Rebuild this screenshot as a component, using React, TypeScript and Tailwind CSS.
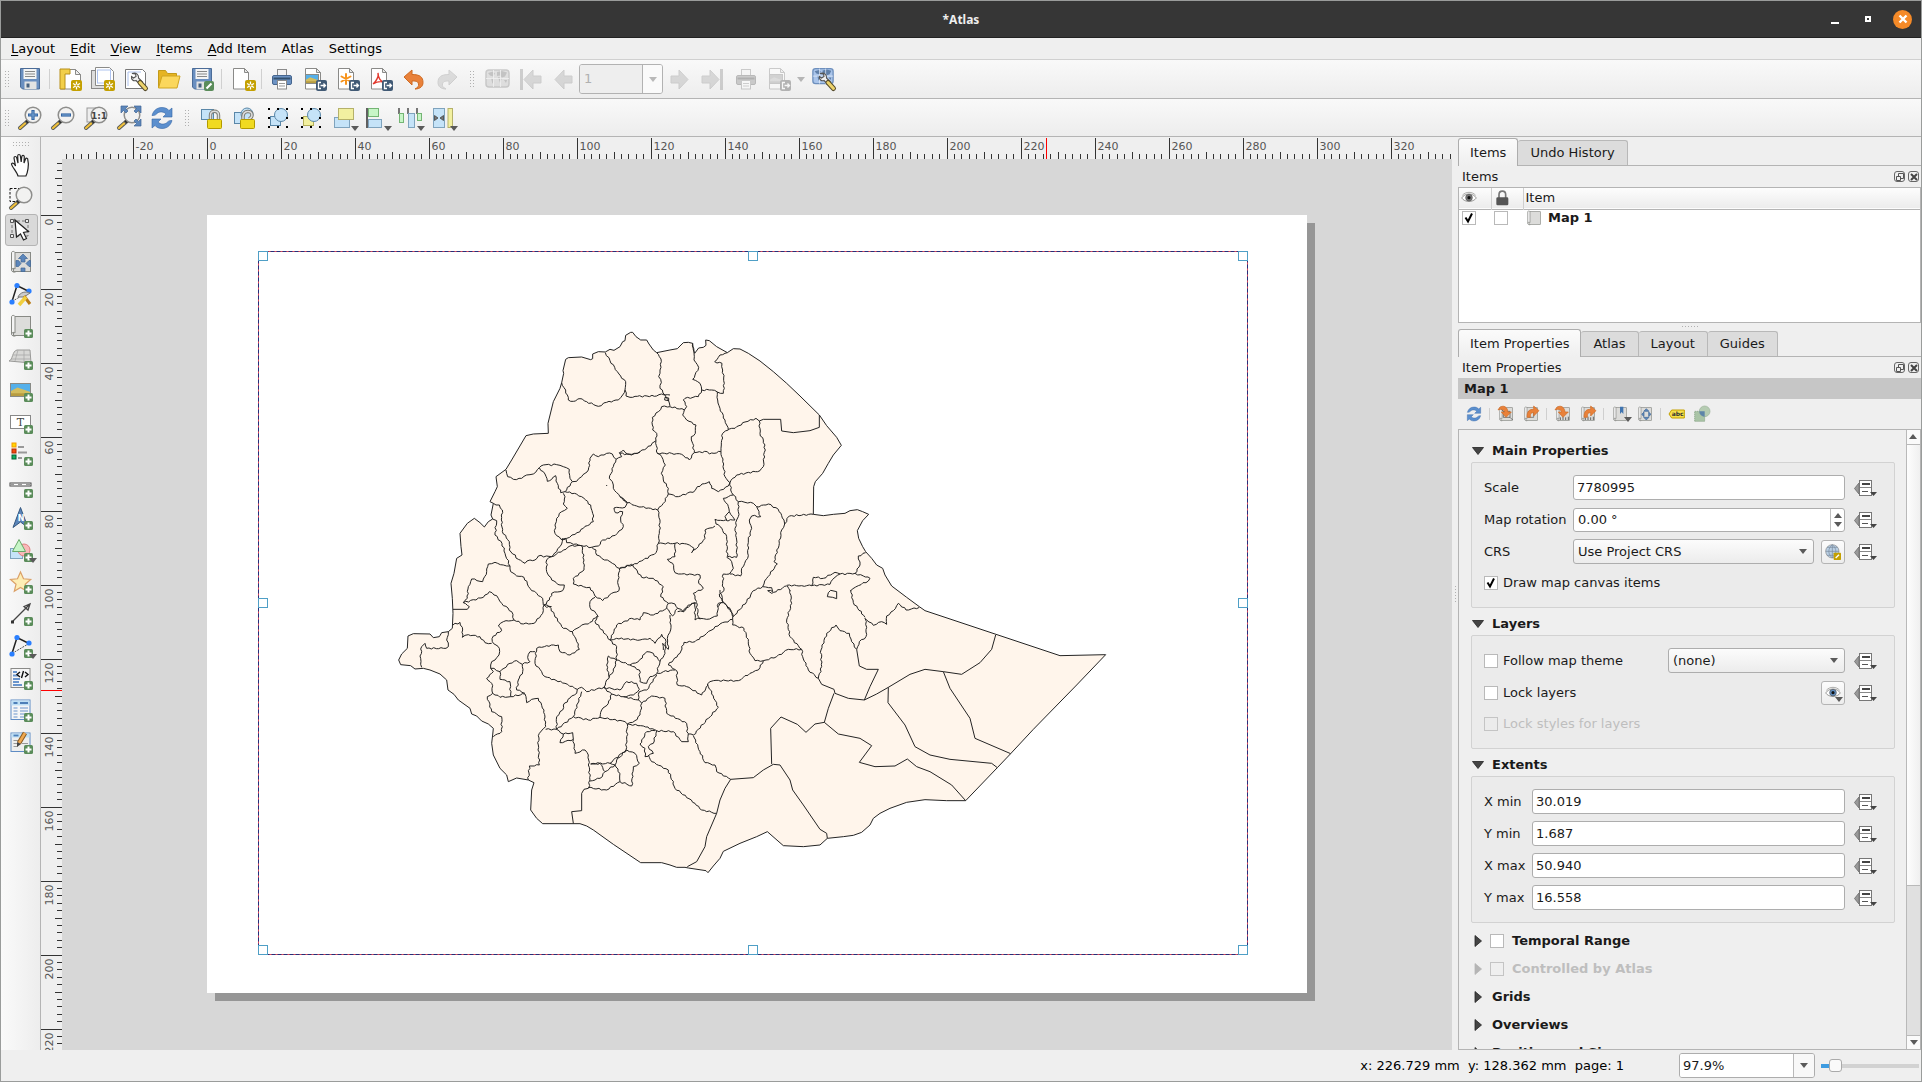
import React, { ReactNode, useId } from "react";

/* ---------- icon primitives ---------- */

function Icon({ children, size = "size-6", dim = false }: { children: ReactNode; size?: string; dim?: boolean }) {
  return (
    <svg viewBox="0 0 24 24" className={`${size} shrink-0 overflow-visible ${dim ? "opacity-40 grayscale" : ""}`} fill="none" aria-hidden="true">
      {children}
    </svg>
  );
}

const PlusBadge = () => (
  <g>
    <rect x="15" y="15" width="9" height="9" rx="1.5" fill="#5a8c5a" />
    <path d="M19.5 16.5v6M16.500 19.500h6" stroke="#fff" strokeWidth="2" />
  </g>
);

const NewBadge = () => (
  <g>
    <rect x="13" y="13" width="11" height="11" rx="2" fill="#c4a000" />
    <path d="M18.5 14.500v8M15 16.500l7 4M22 16.500l-7 4" stroke="#fff" strokeWidth="1.300" />
    <circle cx="18.500" cy="18.500" r="1.400" fill="#c4a000" stroke="#fff" strokeWidth=".8" />
  </g>
);

const ExportBadge = () => (
  <g>
    <rect x="13" y="13" width="11" height="11" rx="2" fill="#415a75" />
    <path d="M18 15.500h-2.500v6h2.500M17.500 18.500h5M20.500 16.500l2 2-2 2" stroke="#fff" strokeWidth="1.300" />
  </g>
);

const PageSheet = ({ x = 2 }: { x?: number }) => (
  <g transform={`translate(${x} 1)`}>
    <path d="M.5.5h11l4 4v16.500H.5z" fill="#fff" stroke="#8a8a88" />
    <path d="M11.500.5v4h4z" fill="#e8e8e6" stroke="#8a8a88" />
  </g>
);

const Landscape = ({ x, y, w, h }: { x: number; y: number; w: number; h: number }) => (
  <g>
    <rect x={x} y={y} width={w} height={h} fill="#55b0ea" />
    <path d={`M${x} ${y + h * 0.6}L${x + w * 0.35} ${y + h * 0.3}L${x + w} ${y + h * 0.65}V${y + h}H${x}z`} fill="#d3bd5f" />
    <path d={`M${x} ${y + h * 0.75}H${x + w}V${y + h}H${x}z`} fill="#b79c40" />
    <rect x={x} y={y} width={w} height={h} stroke="#888a85" />
  </g>
);

const Floppy = () => (
  <g>
    <path d="M2.500 1.500h19v20.500h-17l-2-2z" fill="#6a8fc0" stroke="#4b6c98" />
    <rect x="5.500" y="2" width="13" height="10" fill="#f4f4f4" />
    <path d="M7 4.500h10M7 7h10M7 9.500h10" stroke="#888" />
    <rect x="6.500" y="14.500" width="12" height="7.500" fill="#e3e3e3" />
    <rect x="8.500" y="16.500" width="3" height="4" fill="#46607f" />
  </g>
);

const Lens = ({ children }: { children?: ReactNode }) => (
  <g>
    <path d="M2 22l8-7" stroke="#555753" strokeWidth="4" strokeLinecap="round" />
    <path d="M2 22l5-4.500" stroke="#f0c13c" strokeWidth="2.200" strokeLinecap="round" />
    <path d="M8.500 16l2-2" stroke="#222" strokeWidth="3" />
    <circle cx="15" cy="9" r="7.800" fill="#f2f2f1" stroke="#8e8e8c" strokeWidth="1.500" />
    {children}
  </g>
);

const Refresh = () => (
  <g fill="#5b8fce" stroke="#3465a4" strokeWidth=".6">
    <path d="M2 9.500C3.500 4 7.500 1.500 12 1.500c3 0 5.500 1 7 3L22 2v9h-9l3-3C14 5.500 9 5 6.500 8 5 9.500 4 9.500 2 9.500z" />
    <path d="M22 14.500c-1.500 5.500-5.500 8-10 8-3 0-5.500-1-7-3L2 22v-9h9l-3 3c2 2.500 7 3 9.500 0 1.500-1.500 2.500-1.500 4.500-1.500z" />
  </g>
);

const Wrench = () => (
  <g>
    <path d="M8 8c-1-2 0-4.500 2-5l2.500 3 2-.5.5-2.500c2.500.5 3 3.500 2 5.500l5 9" stroke="#555" strokeWidth="1.200" fill="#eee" />
    <path d="M15.500 14.500l6 7" stroke="#554b2a" strokeWidth="5" strokeLinecap="round" />
    <path d="M15.500 14.500l6 7" stroke="#edd36b" strokeWidth="3" strokeLinecap="round" />
  </g>
);

/** Wrench lying diagonally over the lower right of a sheet. */
const SheetWrench = () => (
  <g>
    <path d="M8 6.500l3.500.5.500 2.500-2.500 1.500-2-1.500c-.5 3 2 5 4.500 4l4 4 2.500-2.500-4-4c.5-3-2-6-6.500-4.500z" stroke="#555" strokeWidth="1.100" fill="#f2f2f2" />
    <path d="M16 15.500l5.500 6" stroke="#554b2a" strokeWidth="5" strokeLinecap="round" />
    <path d="M16 15.500l5.500 6" stroke="#edd36b" strokeWidth="3" strokeLinecap="round" />
  </g>
);

const Printer = () => (
  <g>
    <rect x="7.500" y="2.500" width="9" height="7" fill="#f3f3f3" stroke="#8a8a8a" />
    <rect x="2.500" y="8.500" width="19" height="9" rx="1.500" fill="#6d93c4" stroke="#46668f" />
    <path d="M3.500 11.500h17" stroke="#33506f" strokeWidth="2" />
    <rect x="7.500" y="13.500" width="9" height="8.500" fill="#fff" stroke="#8a8a8a" />
    <path d="M9 16.500h6M9 19h6" stroke="#999" />
  </g>
);

const ExportImage = () => (
  <g><PageSheet /><Landscape x={2.5} y={7.5} w={13} h={9} /><ExportBadge /></g>
);

const WorldMap = () => (
  <g>
    <rect x="1" y="3" width="23" height="17" rx="3" fill="#a9c4ea" stroke="#6d8fbd" strokeWidth="1.500" />
    <path d="M3 6l5-1.500 2 2-2 3-3-1zM6 11l3 1-1.500 5zM12 5l5-1 5 1.500-2 4-3 1-2-2-3 .5zM13 10l4 1-2 5zM19 13l3 0-1 3z" fill="#5f7fa8" />
    <path d="M8.500 3v17M15.500 3v17M1 11.500h23" stroke="#e8f0fa" strokeWidth=".8" />
  </g>
);

const Arrow = () => <path d="M13 3v6h8v7h-8v6L4 12.500z" fill="#9fb0bb" stroke="#8a969e" />;

const Padlock = ({ open = false }: { open?: boolean }) => (
  <g>
    <path d={open ? "M10 14v-3c0-7 9-7 9-2 0 2-1 3-3 4" : "M10.500 14v-5c0-5 8-5 8 0v5"} stroke="#77776f" strokeWidth="3.400" />
    <path d={open ? "M10 14v-3c0-7 9-7 9-2 0 2-1 3-3 4" : "M10.500 14v-5c0-5 8-5 8 0v5"} stroke="#dedede" strokeWidth="1.500" />
    <rect x="7.500" y="13.500" width="14" height="9" rx="1" fill="#f0da20" stroke="#b39a00" />
  </g>
);

const Handles = () => (
  <path d="M2 2h2v2H2zM20 2h2v2h-2zM2 20h2v2H2zM20 20h2v2h-2zM11 20h2v2h-2zM20 11h2v2h-2zM2 11h2v2H2zM11 2h2v2h-2z" fill="#000" />
);

const MapSheet = () => (
  <g>
    <rect x="4.500" y="2.500" width="17" height="19" fill="#dcdcda" stroke="#888a85" />
    <path d="M2.500 2.500C3 1 5.500 1 6 2.500V19c-1-1-3-1-3.500 1z" fill="#f4f4f4" stroke="#888a85" />
    <path d="M2.500 20c0 2 3 2.500 4 2" stroke="#888a85" />
  </g>
);

const Nodes = () => (
  <g>
    <path d="M3 19.500L8 3.500l12 6" stroke="#222" strokeWidth="1.500" />
    <path d="M3 19.500l17-10" stroke="#555" strokeDasharray="2 1" />
    <g fill="#2a7fff"><circle cx="8" cy="3.500" r="2.600" /><circle cx="20" cy="9" r="2.600" /><circle cx="3" cy="20" r="2.600" /></g>
  </g>
);

const Eye = ({ iris = "#5f8fc4" }: { iris?: string }) => (
  <g>
    <path d="M1 12C6 4 18 4 23 12 18 19 6 19 1 12z" fill="#fff" stroke="#8b8b89" strokeWidth="1.300" />
    <path d="M2 8C7 2 17 2 22 8" stroke="#a0a09e" strokeWidth="1.300" />
    <circle cx="12" cy="11.500" r="5" fill={iris} stroke="#555" />
    <circle cx="12" cy="11.500" r="2.400" fill="#111" />
  </g>
);

const TinyDown = ({ className = "" }: { className?: string }) => (
  <svg viewBox="0 0 8 5" className={`h-[5px] w-2 ${className}`} aria-hidden="true"><path d="M0 0h8L4 5z" fill="#5a5a5a" /></svg>
);

/* ---------- toolbars ---------- */

function Tool({ label, children, menu = false, dim = false, active = false }: { label: string; children: ReactNode; menu?: boolean; dim?: boolean; active?: boolean }) {
  return (
    <button type="button" aria-label={label} title={label} disabled={dim}
      className={`relative flex h-8 w-[33px] shrink-0 items-center justify-center rounded-[3px] border ${active ? "border-[#b4b4b4] bg-[#d9d9d9]" : "border-transparent"}`}>
      <Icon dim={dim}>{children}</Icon>
      {menu && <TinyDown className="absolute right-0 bottom-0.5" />}
    </button>
  );
}

const Sep = () => <div className="mx-[3px] h-5 w-px shrink-0 bg-[#d0d0d0]" />;
const Grip = ({ wide = false }: { wide?: boolean }) => (
  <div className={`flex shrink-0 justify-center ${wide ? "w-[17px]" : "w-3"}`}>
    <div className="h-[18px] w-[6px] bg-[radial-gradient(#b0b0b0_35%,transparent_40%)] bg-[length:3px_3px]" />
  </div>
);

const topTools = (
  <>
    <Grip />
    <Tool label="Save Project"><Floppy /></Tool>
    <Sep />
    <Tool label="New Layout">
      <path d="M2.500 2.500h15l5 5V22h-20z" fill="#fff" stroke="#8a8a88" />
      <path d="M2 2h10v5H7v15H2z" fill="#f2cf4a" stroke="#b8901a" />
      <path d="M17.500 2.500v5h5z" fill="#eee" stroke="#8a8a88" /><NewBadge />
    </Tool>
    <Tool label="Duplicate Layout">
      <rect x=".5" y="3.500" width="16" height="18" fill="#ddd" stroke="#888" />
      <path d="M4.500.5h14l4 4V18.500h-18z" fill="#fff" stroke="#8a8a88" />
      <rect x="6.500" y="3" width="13" height="13" stroke="#aec3ef" /><NewBadge />
    </Tool>
    <Tool label="Layout Manager">
      <path d="M1.500 2.500h17l3 3V21.500h-20z" fill="#fff" stroke="#777" /><path d="M4 5h13M4 5v14" stroke="#aec3ef" /><SheetWrench />
    </Tool>
    <Tool label="Add Items from Template">
      <path d="M1.500 21V3.500h7l2 3h9V9" fill="#e6b422" stroke="#c29a1a" />
      <path d="M1.500 21L5 9h18l-3 12z" fill="#fbd75c" stroke="#d0a520" />
    </Tool>
    <Tool label="Save as Template">
      <Floppy /><rect x="14" y="14" width="10" height="10" rx="2" fill="#5a8c5a" /><path d="M16.500 21.500l5-5" stroke="#fff" strokeWidth="2.200" />
    </Tool>
    <Sep />
    <Tool label="Add Pages"><PageSheet x={3} /><g transform="translate(2 0)"><NewBadge /></g></Tool>
    <Sep />
    <Tool label="Print Layout"><Printer /></Tool>
    <Tool label="Export as Image"><ExportImage /></Tool>
    <Tool label="Export as SVG">
      <PageSheet /><path d="M10 7v10M5.500 9.500l9 5M14.500 9.500l-9 5" stroke="#f7941d" strokeWidth="2" strokeLinecap="round" /><ExportBadge />
    </Tool>
    <Tool label="Export as PDF">
      <PageSheet /><path d="M4 17c3-2 6-8 5-11 0 5 3 9 6 9-3-1-8 0-11 2z" stroke="#e2372c" strokeWidth="1.400" /><ExportBadge />
    </Tool>
    <Tool label="Undo"><path d="M2 10l8-7v4.500c8 0 11 2.500 11 8 0 4-3 6.500-8 6.500 3-1.500 4-3 3.500-5-.5-2.500-2-3-6.500-3V18z" fill="#e9813a" stroke="#ce6a22" /></Tool>
    <Tool label="Redo" dim><path d="M22 10l-8-7v4.500c-8 0-11 2.500-11 8 0 4 3 6.500 8 6.500-3-1.500-4-3-3.500-5 .5-2.500 2-3 6.500-3V18z" fill="#b5b8b3" stroke="#999" /></Tool>
    <Grip wide />
    <Tool label="Preview Atlas" dim><WorldMap /></Tool>
    <Tool label="First Feature" dim><g transform="translate(2 0)"><Arrow /></g><rect x="2" y="2" width="3" height="21" fill="#8a969e" /></Tool>
    <Tool label="Previous Feature" dim><Arrow /></Tool>
    <div className="flex h-[30px] w-[84px] shrink-0 overflow-hidden rounded-[3px] border border-[#b2b2b2]">
      <input aria-label="Atlas page" disabled defaultValue="1" className="min-w-0 flex-1 bg-[#eeeeee] pl-1 text-[13px] text-[#b0b0b0]" />
      <button type="button" aria-label="Choose page" disabled className="flex w-5 items-center justify-center border-l border-[#b2b2b2] bg-[#fafafa]"><TinyDown className="opacity-40" /></button>
    </div>
    <Tool label="Next Feature" dim><g transform="rotate(180 12 12.500)"><Arrow /></g></Tool>
    <Tool label="Last Feature" dim><g transform="rotate(180 11 12.500)"><Arrow /></g><rect x="19" y="2" width="3" height="21" fill="#8a969e" /></Tool>
    <Tool label="Print Atlas" dim><Printer /></Tool>
    <Tool label="Export Atlas as Images" dim><ExportImage /></Tool>
    <button type="button" disabled aria-label="Atlas export options" className="flex w-3 shrink-0 justify-center"><TinyDown className="opacity-40" /></button>
    <Tool label="Atlas Settings"><g transform="translate(0 -1) scale(.88)"><WorldMap /></g><SheetWrench /></Tool>
  </>
);

const bottomTools = (
  <>
    <Grip />
    <Tool label="Zoom In"><Lens><path d="M15 4v10M10 9h10" stroke="#3465a4" strokeWidth="3.200" /><path d="M15 5v8M11 9h8" stroke="#729fcf" strokeWidth="1.200" /></Lens></Tool>
    <Tool label="Zoom Out"><Lens><path d="M10 9h10" stroke="#3465a4" strokeWidth="3.200" /><path d="M11 9h8" stroke="#729fcf" strokeWidth="1.200" /></Lens></Tool>
    <Tool label="Zoom to 100%">
      <rect x="3" y="2" width="11" height="14" fill="#eee" stroke="#999" />
      <Lens><text x="15" y="12.500" textAnchor="middle" fontSize="9" fontWeight="bold" fill="#444">1:1</text></Lens>
    </Tool>
    <Tool label="Zoom Full">
      <Lens />
      <g fill="#5c86ba" stroke="#3f6695" strokeWidth=".7">
        <path d="M4 0h7L8.500 2.500 11 5 9 7 6.500 4.500 4 7zM24 0v7l-2.500-2.500L19 7l-2-2 2.500-2.500L17 0zM24 20h-7l2.500-2.500L17 15l2-2 2.500 2.500L24 13z" />
      </g>
    </Tool>
    <Tool label="Refresh View"><Refresh /></Tool>
    <Grip wide />
    <Tool label="Lock Selected Items"><rect x="1.500" y="3.500" width="12" height="10" fill="#c5e3f8" stroke="#5a87a8" /><Padlock /></Tool>
    <Tool label="Unlock All"><rect x="1.500" y="6.500" width="10" height="11" fill="#c5e3f8" stroke="#5a87a8" /><circle cx="14" cy="8" r="6" fill="#c5e3f8" stroke="#5a87a8" /><Padlock open /></Tool>
    <Tool label="Group"><rect x="4.500" y="10.500" width="10" height="9" fill="#c5e3f8" stroke="#5a87a8" /><circle cx="15" cy="9" r="6.500" fill="#c5e3f8" stroke="#5a87a8" /><Handles /></Tool>
    <Tool label="Ungroup"><rect x="4.500" y="10.500" width="10" height="9" fill="#f2f0a0" stroke="#b5b05a" /><circle cx="15" cy="9" r="6.500" fill="#c5e3f8" stroke="#5a87a8" /><Handles /></Tool>
    <Tool label="Raise Selected Items" menu><rect x="2.500" y="11.500" width="15" height="10" fill="#c5e3f8" stroke="#7fa3bd" /><rect x="6.500" y="2.500" width="15" height="11" fill="#f2f0a0" stroke="#b5b16a" /></Tool>
    <Tool label="Align Left" menu><path d="M2 2v20" stroke="#222" strokeWidth="1.400" /><rect x="3.500" y="2.500" width="10" height="8" fill="#c7f5c7" stroke="#74b574" /><rect x="3.500" y="13.500" width="13" height="8" fill="#c5e3f8" stroke="#7fa3bd" /></Tool>
    <Tool label="Distribute Left Edges" menu><path d="M1 2v6M10 2v6M19 2v6" stroke="#222" strokeWidth="1.200" /><rect x="1.500" y="7.500" width="4" height="9" fill="#c7f5c7" stroke="#74b574" /><rect x="10.500" y="7.500" width="6" height="14" fill="#c5e3f8" stroke="#7fa3bd" /><rect x="19.500" y="7.500" width="4" height="7" fill="#c7f5c7" stroke="#74b574" /></Tool>
    <Tool label="Resize to Narrowest" menu><rect x="2.500" y="2.500" width="11" height="19" fill="#c5e3f8" stroke="#7fa3bd" /><rect x="17" y="2.500" width="4.500" height="19" fill="#f2f0a0" stroke="#b5b16a" /><path d="M7 12L3.500 9.500v5zM9 12l3.500-2.500v5z" stroke="#444" fill="#777" strokeWidth=".8" /></Tool>
  </>
);

const sideTools = (
  <>
    <Tool label="Pan Layout">
      <path d="M9 22c-1-4-6-9-6.500-12C3 8.500 5 9 6.500 12L5 4c0-2 2.300-2 2.800 0L9 9l-.3-7c0-2 2.500-2 2.700 0l.8 6 .6-5.500c.3-1.800 2.500-1.500 2.500.3L15 9l1.500-4c.6-1.500 2.500-.8 2.300.8 1.500 5-.3 13-1.800 16z" fill="#fff" stroke="#222" strokeWidth="1.200" />
    </Tool>
    <Tool label="Zoom"><path d="M1 2.500h14v13H1z" stroke="#111" strokeDasharray="2.500 1.500" /><Lens /></Tool>
    <Tool label="Select/Move Item" active>
      <path d="M3 3h16v15H3z" stroke="#777" strokeDasharray="3 2" />
      <g fill="#eee" stroke="#555"><path d="M1.500 1.500h3v3h-3zM16.500 1.500h3v3h-3zM1.500 16.500h3v3h-3z" /></g>
      <path d="M6 2l1.500 17 4-3 3 6 3-1.500-3-6 5-1z" fill="#fff" stroke="#222" strokeWidth="1.200" />
    </Tool>
    <Tool label="Move Item Content">
      <MapSheet />
      <path d="M14 4l4.500 4.500H16V12h-4V8.500H9.500zM7 10.500h2.500l2.500 3-2.500 3H7zM21.500 10.500H20L17 13.500l3 3h1.500zM12 18h4v3.500h-4z" fill="#5c86ba" stroke="#3f6695" strokeWidth=".7" />
    </Tool>
    <Tool label="Edit Nodes Item"><Nodes /><path d="M9 15c2-5 8-6 12-4l-6 4z" fill="#ccc" stroke="#777" /><path d="M15 14l6 8" stroke="#b97a12" strokeWidth="3" /><path d="M17 15l-7 8" stroke="#f1cf3f" strokeWidth="3.500" /></Tool>
    <Tool label="Add Map"><MapSheet /><PlusBadge /></Tool>
    <Tool label="Add 3D Map">
      <path d="M0 15c4-1 3-10 8-11h13l1 13-11-1z" fill="#d8d8d6" stroke="#9a9a98" />
      <path d="M4 9h17M2 13h19M9 4L6 15M15 4v13" stroke="#aaa" strokeWidth=".8" /><PlusBadge />
    </Tool>
    <Tool label="Add Picture"><Landscape x={1.5} y={5.5} w={20} h={13} /><PlusBadge /></Tool>
    <Tool label="Add Label">
      <rect x="1.500" y="5.500" width="20" height="13" fill="#fff" stroke="#888" />
      <text x="11.500" y="16" textAnchor="middle" fontSize="11" fontFamily="DejaVu Serif, serif" fill="#444">T</text><PlusBadge />
    </Tool>
    <Tool label="Add Legend">
      <rect x="3" y="1" width="4" height="4" fill="#ffd700" stroke="#f59a00" /><rect x="3" y="7" width="4" height="4" fill="#f54a10" stroke="#b32a00" /><rect x="3" y="13" width="4" height="4" fill="#10b060" stroke="#066034" />
      <path d="M9 5h6M9 10.500h9M9 16h4" stroke="#999" strokeWidth="1.800" /><PlusBadge />
    </Tool>
    <Tool label="Add Scale Bar"><rect x="1" y="9" width="21" height="3" fill="#fff" stroke="#444" /><path d="M1 10.500h4M9 10.500h4M17 10.500h4" stroke="#999" strokeWidth="2" /><PlusBadge /></Tool>
    <Tool label="Add North Arrow">
      <path d="M11.500 1.500l7.500 20-7.500-5.500-7.500 5.500z" fill="#5c86ba" stroke="#34577f" />
      <text x="12" y="15" textAnchor="middle" fontSize="8" fontWeight="bold" fill="#fff">N</text><PlusBadge />
    </Tool>
    <Tool label="Add Shape" menu><rect x="1.500" y="10.500" width="12" height="10" fill="#c5e3f8" stroke="#7fa3bd" /><circle cx="15" cy="12" r="6" fill="#f9b9b9" stroke="#e07f7f" /><path d="M10 1.500l6.500 12h-13z" fill="#c7f5c7" stroke="#68a868" /><PlusBadge /></Tool>
    <Tool label="Add Marker"><path d="M11.500 2l3 6.800 7.200.7-5.500 4.800 1.800 7-6.500-3.800-6.200 3.800 1.700-7L1.500 9.500l7-.7z" fill="#fdeeb5" stroke="#dba067" strokeWidth="1.200" /><PlusBadge /></Tool>
    <Tool label="Add Arrow"><path d="M3 20L20 3M15 4.500L21 2l-2 6z" stroke="#444" strokeWidth="1.300" fill="#fff" /><path d="M2 18.500h3v3H2z" fill="#333" /><PlusBadge /></Tool>
    <Tool label="Add Node Item" menu><Nodes /><PlusBadge /></Tool>
    <Tool label="Add HTML">
      <rect x="2" y="2.500" width="19" height="19" fill="#f6f6f6" stroke="#8a8a88" />
      <path d="M4 6h4M4 9.500h5M4 13h7M4 16h6M4 19h9" stroke="#6a95cc" strokeWidth="1.800" />
      <path d="M11 6l-3 2.500 3 2.500M16 6l3 2.500-3 2.500M14.500 5l-2 7" stroke="#111" strokeWidth="1.400" /><PlusBadge />
    </Tool>
    <Tool label="Add Fixed Table">
      <rect x="2" y="2" width="19" height="19.500" fill="#f6f6f6" stroke="#5f8cc4" /><rect x="2.500" y="2.500" width="18" height="5" fill="#bfe0f5" />
      <path d="M4.500 5h4M11 5h8" stroke="#4d7fb8" strokeWidth="1.800" /><path d="M4.500 10h4M11 10h8M4.500 13h4M11 13h8M4.500 16h4M11 16h8M4.500 19h4M11 19h8" stroke="#6a95cc" /><PlusBadge />
    </Tool>
    <Tool label="Add Attribute Table">
      <rect x="2" y="3" width="19" height="18.500" fill="#eee" stroke="#5f8cc4" /><rect x="2.500" y="3.500" width="18" height="4" fill="#bfe0f5" />
      <path d="M4.500 5.500h5" stroke="#4d7fb8" strokeWidth="1.800" /><path d="M4.500 10.500h8M4.500 13.500h4M4.500 16.500h4M13 13.500h6" stroke="#999" />
      <path d="M16 3l-6 10" stroke="#8a5a20" strokeWidth="4.600" /><path d="M16 3l-6 10" stroke="#f0a850" strokeWidth="2.600" /><path d="M8 12l4 2-4 3z" fill="#444" /><PlusBadge />
    </Tool>
  </>
);

/* ---------- rulers ---------- */

const PX_PER_MM = 3.7;

function Ruler({ zero, from, to, marker, vertical = false }: { zero: number; from: number; to: number; marker: number; vertical?: boolean }) {
  const ticks: ReactNode[] = [];
  for (let mm = from; mm <= to; mm += 2) {
    const p = Math.floor(zero + mm * PX_PER_MM) + 0.5;
    const len = mm % 20 === 0 ? 21 : mm % 10 === 0 ? 7 : 5;
    ticks.push(vertical ? <path key={mm} d={`M${21 - len} ${p}H21`} /> : <path key={mm} d={`M${p} ${21 - len}V21`} />);
    if (mm % 20 === 0)
      ticks.push(
        vertical ? (
          <text key={`t${mm}`} transform={`translate(12 ${p + 3}) rotate(-90)`} textAnchor="end" fill="#555" stroke="none">{mm}</text>
        ) : (
          <text key={`t${mm}`} x={p + 2} y="12" fill="#555" stroke="none">{mm}</text>
        )
      );
  }
  return (
    <svg className={vertical ? "h-full w-[21px] shrink-0" : "h-[21px] w-full"} fontSize="11" stroke="#333" aria-hidden="true">
      {ticks}
      {vertical ? <path d={`M0 ${marker}.5H21`} stroke="#f00" /> : <path d={`M${marker}.5 0V21`} stroke="#f00" />}
    </svg>
  );
}

/* ---------- district map ---------- */

type Tile = { x: number; y: number; lines: string[] };

const outline: { x: number; y: number; pts: string }[] = [
  { x: 0, y: 0, pts: "545,188 551,160 549,152 557,118 565,113 605,111 632,119 638,116 638,102 655,95 676,96 690,88 702,91 720,80 728,65 735,62 737,46 752,37" },
  { x: 720, y: 0, pts: "38,37 48,50 62,60 80,60 87,72 100,90 110,98 150,90 172,86 190,68 205,67 218,70 220,90 224,100 236,84 250,82 258,76 257,60 268,62 290,80 322,98 340,86 360,87 385,100 420,123 460,155 500,190 540,228 598,285 620,317 650,352 664,376 640,405 625,430 608,460 586,485 581,500 580,583 610,587 640,583 675,580 690,572 712,569 728,575 746,583 728,602 712,632 716,655 728,680 737,695 755,715 770,735 788,745 795,765 815,798 860,832 898,860" },
  { x: 900, y: 810, pts: "735,62 945,132 1140,197 1277,194 1190,285 1060,418 992,491 952,533 857,632 800,632 735,629 680,637 630,655 600,670 580,685 570,705 545,727 520,736 490,740 442,745 420,765 370,770 310,767 262,725 230,740 180,760 130,784 120,805 100,828 84,848 78,842 25,834" },
  { x: 0, y: 840, pts: "915,802 890,802 870,795 845,788 782,788 700,733 640,690 620,678 600,671 488,671 470,655 452,630 455,570 462,548 445,540 410,534 385,545 380,525 360,505 340,465 335,430 338,405 340,385 325,372 305,363 290,348 275,342 270,325 235,300 222,283 204,270 200,240 180,222 150,210 130,205 105,207 92,197 62,194 56,180 65,162 82,145 84,108 100,101 150,102 160,113 178,110 185,98 205,95 217,85 219,40" },
  { x: 0, y: 0, pts: "217,835 213,790 222,760 230,715 246,705 243,680 240,640 262,610 283,595 300,608 313,621 325,605 338,597 333,585 340,550 330,545 345,515 352,500 348,470 378,448 395,420 438,347 460,342 505,340 504,310 520,245 540,205" },
];

const tiles: Tile[] = [
  {
    x: 0, y: 0,
    lines: [
      "545,188 562,225 565,240 580,244 600,236 620,245 655,259 680,247 715,240 728,225 735,210 737,185 722,168 712,155 690,122 676,98",
      "735,210 738,228 750,232 765,229 830,228 845,222 870,225",
      "378,450 383,470 400,478 425,475 440,465 460,462 478,443 490,435 530,434 550,440 568,448 570,475 577,485 590,484 605,470 625,450 630,415 640,402 655,410 680,400 697,402 708,418 725,410 718,398 730,390 742,402 755,403 780,396",
      "478,443 495,462 502,484 515,478 527,467 532,490 542,518 555,515 577,485",
      "708,418 700,440 688,475 697,485 700,505 720,530 742,548",
      "742,548 735,562 702,564 706,578 728,575 722,600 730,620 712,640 690,655 668,660 655,678 635,682 605,677 580,673 560,668 558,655 545,658",
      "555,515 590,522 612,535 632,555 638,580 640,605 610,625 585,643 560,655 543,658 525,640 525,615 530,595 545,575 562,565 550,552 555,530 550,520",
      "340,550 358,555 367,570 364,600 367,635 388,665 388,690 415,718 435,730 450,720 465,720 475,708 515,710 530,695 545,672 548,655",
      "338,597 350,602 345,645 366,670 375,700 390,738 392,755 410,768 432,772 450,805 470,820 488,835 490,855",
      "515,710 500,720 500,755 515,780 540,795 553,795 548,812 515,820 508,840 492,855 500,862 515,860",
      "515,710 550,690 570,678 605,677 612,720 612,750 580,775 580,792 610,800 630,802 645,828 668,842 695,820 717,812 714,780 718,745 690,725 665,715 650,705 648,690 635,682",
      "718,745 755,733 758,735",
      "390,738 370,735 345,727 325,732 320,755 308,785 275,777 265,800 262,835 250,848",
      "250,848 310,832 328,815 350,827 365,850 395,875 402,900",
      "645,832 630,845 630,862 648,880 655,890",
      "679,495 681,498",
    ],
  },
  {
    x: 720, y: 0,
    lines: [
      "110,98 118,110 124,125 120,150 116,170 124,188 120,205 135,225 145,240 150,258",
      "135,232 146,234 146,242 134,240 135,232",
      "218,70 222,100 222,120 236,142 225,165 218,178 240,190 245,210 275,210 292,216 310,220 313,190 308,150 306,130 284,125 300,105 322,98",
      "245,210 235,230 195,235 190,240 200,260 193,270 150,260 125,260 115,275 97,292 98,330 110,340 108,362 112,400",
      "193,270 188,285 200,300 228,315 226,340 214,350 218,370 223,398 208,420 185,403 155,400 112,400",
      "223,398 262,395 268,402 303,395 304,375 308,340 325,330 315,300 300,265 293,240 292,216",
      "303,395 308,425 315,470 330,488",
      "325,328 345,325 375,306 408,295 418,303 420,340 430,360 435,375 430,440 420,452 350,465 338,475 330,488",
      "112,400 125,410 136,435 124,460 130,480 145,505 145,522 130,550 113,570 50,558 22,548 0,530",
      "145,522 175,530 225,512 232,500 268,485 275,505 295,515 325,498 330,488 332,510 340,525 355,545 375,547 400,550 410,560 422,590 395,588 388,600 395,625 385,660 383,715 365,745 362,768 330,762",
      "355,545 355,590 350,600 345,625 350,660 350,712 322,710 320,650 300,620 288,612 285,598 310,602 345,600",
      "340,525 310,535 325,560 328,575 315,590 320,600",
      "328,575 338,590 345,600",
      "410,560 445,552 475,568 492,600 494,612 485,630 478,670 462,725 472,732 440,775 428,800 455,803 458,815 443,812 455,820 500,798",
      "494,612 508,588 580,583",
      "113,570 120,600 118,640 115,670 165,670 200,672 222,685 215,698 235,680 255,655 255,630 285,618",
      "115,670 108,698 70,720 38,735 0,745",
      "165,670 165,710 142,718 158,730 165,758 185,762 240,765 236,790 250,805 220,820 230,845",
      "38,735 65,772 100,775 130,800 122,830 145,850 165,852 173,865 158,888 140,865 145,850",
      "173,865 190,875 215,850 230,848 235,890 240,898",
      "320,712 335,725 340,745 328,762 310,762 308,790 312,812 298,822 308,845 295,860",
      "308,845 330,865 340,890 380,845 400,812 428,800",
      "500,796 545,797 575,797 580,772 610,775 645,757 660,762 705,760 720,735 715,708 737,698",
      "575,797 630,793 638,778 660,762",
      "705,760 730,768 750,775 745,783 715,797 692,812",
      "502,798 510,812",
      "108,362 80,385 60,395 35,405 0,400",
    ],
  },
  {
    x: 0, y: 840,
    lines: [
      "262,28 268,20 250,8",
      "219,75 240,67 248,90 247,112 265,104 300,110 315,128 335,130",
      "402,60 370,65 355,78 365,92 340,108 337,125 358,145 357,165 345,180 335,185 332,205",
      "402,60 430,72 462,70 488,40 492,15",
      "492,15 508,20 545,80 577,95 605,75 625,72 652,48 645,65 690,120",
      "577,95 590,125 598,148 570,165 540,155 535,135 500,137 470,145 465,190 485,215 495,230 555,250 592,268",
      "465,155 450,155 443,172 450,185 427,193 410,182 390,190 360,215 342,205 332,205",
      "427,193 428,215 415,240 410,270 435,280",
      "360,215 360,238 390,245 392,290",
      "332,205 340,215 320,235 335,250 338,280 360,292 392,290 435,282 440,308 455,298 475,295 492,330 497,380 478,400 475,435 478,495 448,498 445,540",
      "338,280 322,290 335,335 365,350 365,395 340,410",
      "530,388 530,350 548,330 550,315 575,288 590,280 592,268 605,262 620,275 672,262 680,240 700,215 710,180 710,140 690,120 710,75 755,55 780,60 790,38 820,45 860,25",
      "497,388 530,388 580,350 605,275",
      "550,402 540,428 580,418 578,398 550,402",
      "580,418 585,460 615,450 625,465 630,540 625,565",
      "530,388 550,402",
      "580,350 625,360 660,352 735,365 742,372 740,410 738,450 700,480 690,490 632,492",
      "660,352 665,330 685,310 695,282 670,262",
      "695,282 730,290 775,300 785,310 780,345 765,362 742,372",
      "672,262 720,270 740,245 770,250 778,268 760,285 730,290",
      "710,180 685,168 680,195 688,232",
      "710,180 750,195 778,210 780,245 800,250 810,230 825,225 850,215 885,210",
      "750,195 775,185 800,155 820,160 840,185 830,220",
      "690,120 710,115 780,120 810,115 825,130 845,103 858,125 855,160 840,185",
      "870,45 872,60 872,90 862,115 865,148 848,130 850,150",
      "893,35 910,35 925,15 945,8",
      "912,127 900,160 865,195 890,212 892,255 920,260 965,285 985,255",
      "785,310 815,288 855,295 860,340 920,370 925,425 905,425 880,395 830,392",
      "742,372 790,378 830,392 820,430 805,440 820,460 795,470 795,445 780,432 800,395 825,392",
      "805,465 815,485 865,510 885,565 945,610 965,630 1010,640",
      "925,402 940,405",
      "632,492 660,490 675,515 660,535 630,543",
      "690,490 705,495 675,515",
      "705,495 710,480 740,450 765,460 778,490 760,500 755,558 720,545 720,520 705,495",
      "720,545 680,570 625,563",
      "775,300 778,275 800,270 830,225",
      "125,202 122,175 125,140 135,130 140,145 190,145 205,140 200,120 205,95",
    ],
  },
  {
    x: 900, y: 810,
    lines: [
      "12,157 45,155 80,130 120,102 158,88 155,65 130,38",
      "158,88 158,105 192,115 205,155 210,190 225,212 250,212 290,200 325,178 365,178 368,200 385,240 415,265",
      "250,212 235,240 210,250 175,272 100,272 82,282",
      "330,0 335,40 320,90 330,140 365,178",
      "415,265 425,230 423,180 440,130 468,105 480,122 508,130 515,155 530,178 538,155 558,140 560,112 555,85 580,106 605,95 620,103 620,78 640,62 655,40 678,60 718,52",
      "512,0 520,38 555,82",
      "82,282 100,318 115,352 85,385 40,435",
      "40,437 60,485 75,518 105,525 110,545 152,568",
      "45,38 45,90 60,85 80,88 112,78 115,40 130,38 120,0",
    ],
  },
];

const smoothTiles: Tile[] = [
  { x: 720, y: 0, lines: ["418,303 430,298 482,298 485,333 520,338 570,332 598,322 598,285", "625,818 632,811 650,815 650,836 638,832 622,830 625,818"] },
  { x: 0, y: 840, lines: ["219,28 262,28", "625,565 612,568 605,580 605,632 575,635 580,670", "1020,600 1010,640 980,710 975,740 950,785 922,800"] },
  {
    x: 900, y: 810,
    lines: [
      "530,178 538,228 560,238 595,238 570,290 553,330",
      "415,265 425,283 462,298 465,310 505,325 553,330 590,312 625,292 690,253 735,238 790,245 845,253 900,218 935,178 947,135",
      "790,245 810,295 870,385 885,445 992,491",
      "625,292 624,338 675,405 705,470 750,495 810,508 935,520 952,533",
      "462,310 445,355 433,397 475,432 540,445 575,467 538,517 585,530 645,528 682,507 710,530 750,545 815,585 857,632",
      "433,397 405,402 378,427 352,403 303,381 272,415 275,522",
      "152,568 220,563 250,540 280,523 300,525 330,570 338,600 370,645 420,718 440,730 442,745",
      "152,568 135,595 120,630",
    ],
  },
];

const parse = (pts: string, dx: number, dy: number) =>
  pts.split(" ").map((p) => {
    const [x, y] = p.split(",").map(Number);
    return [x + dx, y + dy];
  });

const toPath = (points: number[][]) => "M" + points.map((p) => p.join(" ")).join("L");

/** Adds small zigzags between vertices so that surveyed borders look natural. */
function roughen(points: number[][]) {
  const out: number[][] = [points[0]];
  for (let i = 1; i < points.length; i++) {
    const [ax, ay] = points[i - 1];
    const [bx, by] = points[i];
    const len = Math.hypot(bx - ax, by - ay);
    const n = Math.floor(len / 7);
    for (let k = 1; k < n; k++) {
      const t = k / n;
      const s = Math.sin(ax * 3.1 + by * 1.7 + k * 2.3) * 2.2;
      out.push([Math.round(ax + (bx - ax) * t - ((by - ay) / len) * s), Math.round(ay + (by - ay) * t + ((bx - ax) / len) * s)]);
    }
    out.push([bx, by]);
  }
  return out;
}

const outlinePath = toPath(outline.flatMap((o) => parse(o.pts, o.x, o.y))) + "Z";
const roughPath = tiles.map((t) => t.lines.map((l) => toPath(roughen(parse(l, t.x, t.y)))).join("")).join("");
const smoothPath = smoothTiles.map((t) => t.lines.map((l) => toPath(parse(l, t.x, t.y))).join("")).join("");

const handleSpots = [
  "left-0 top-0", "left-1/2 top-0 -translate-x-1/2", "right-0 top-0",
  "left-0 top-1/2 -translate-y-1/2", "right-0 top-1/2 -translate-y-1/2",
  "left-0 bottom-0", "left-1/2 bottom-0 -translate-x-1/2", "right-0 bottom-0",
];

function Canvas() {
  return (
    <div className="relative min-w-0 flex-1 overflow-hidden bg-[#d7d7d7]">
      <div className="absolute top-14 left-[145px] h-[778px] w-[1100px] bg-white shadow-[8px_8px_0_#969696]">
        <div className="absolute top-9 left-[51px] h-[704px] w-[990px]">
          <svg viewBox="0 0 990 704" className="size-full" role="img" aria-label="Map 1">
            <g transform="translate(122 69) scale(.333333)" strokeLinejoin="round" stroke="#232323" strokeWidth="3">
              <path d={outlinePath} fill="#fff5eb" />
              <path d={roughPath} fill="none" />
              <path d={smoothPath} fill="none" />
            </g>
            <rect x=".5" y=".5" width="989" height="703" fill="none" stroke="#e04a5a" />
            <rect x=".5" y=".5" width="989" height="703" fill="none" stroke="#26307a" strokeDasharray="4 2" />
          </svg>
          {handleSpots.map((s) => (
            <div key={s} className={`absolute size-[10px] border border-[#4f9fc6] bg-white ${s}`} />
          ))}
        </div>
      </div>
    </div>
  );
}

/* ---------- dock widgets ---------- */

function Tabs({ tabs }: { tabs: string[] }) {
  return (
    <div role="tablist" className="flex h-7 shrink-0 items-end border-b border-[#b4b4b4]">
      {tabs.map((t, i) =>
        i === 0 ? (
          <button key={t} type="button" role="tab" aria-selected="true" className="-mb-px h-7 rounded-t-[3px] border border-b-0 border-[#adadad] bg-gradient-to-b from-[#fbfbfb] to-[#efefef] px-[11px]">{t}</button>
        ) : (
          <button key={t} type="button" role="tab" aria-selected="false" className="h-[25px] rounded-t-[3px] border border-b-0 border-l-0 border-[#b8b8b8] bg-[#dcdcdc] px-3">{t}</button>
        )
      )}
    </div>
  );
}

function DockTitle({ title }: { title: string }) {
  return (
    <div className="flex h-[21px] shrink-0 items-center gap-[3px] pr-0.5 pl-1">
      <h2 className="flex-1">{title}</h2>
      <button type="button" aria-label={`Float ${title}`} className="flex size-[11px] items-center justify-center rounded-[3px] border border-[#666]">
        <svg viewBox="0 0 8 8" className="size-2" fill="none" stroke="#555"><path d="M.5 3.500h4v4h-4zM2.500 3V.5h5v5H5" /></svg>
      </button>
      <button type="button" aria-label={`Close ${title}`} className="flex size-[11px] items-center justify-center rounded-[3px] border border-[#666]">
        <svg viewBox="0 0 8 8" className="size-2" stroke="#444" strokeWidth="2"><path d="M1 1l6 6M7 1L1 7" /></svg>
      </button>
    </div>
  );
}

function Check({ id, label, checked = false, disabled = false }: { id?: string; label?: string; checked?: boolean; disabled?: boolean }) {
  return (
    <span className="relative flex size-[14px] shrink-0">
      <input id={id} type="checkbox" aria-label={label} defaultChecked={checked} disabled={disabled}
        className="peer size-[14px] appearance-none border border-[#b9b9b9] bg-white disabled:border-[#c4c4c4] disabled:bg-transparent" />
      <svg viewBox="0 0 14 14" className="pointer-events-none invisible absolute inset-0 peer-checked:visible" fill="none" stroke="#000" strokeWidth="2"><path d="M3.500 6.500l2.500 4 4-8" /></svg>
    </span>
  );
}

function CheckLine({ label, checked, disabled }: { label: string; checked?: boolean; disabled?: boolean }) {
  const id = useId();
  return (
    <div className="flex h-6 items-center gap-[5px]">
      <Check id={id} checked={checked} disabled={disabled} />
      <label htmlFor={id} className={disabled ? "text-[#bebebe]" : ""}>{label}</label>
    </div>
  );
}

const Override = ({ name }: { name: string }) => (
  <button type="button" aria-label={`Data-defined override for ${name}`} className="ml-[9px] flex h-5 w-6 shrink-0 items-center">
    <svg viewBox="0 0 24 18" className="h-[18px] w-6" fill="none">
      <path d="M5 4v11L.5 9.500z" fill="#999" stroke="#777" />
      <rect x="5.500" y="1.500" width="12" height="15" fill="#fff" stroke="#777" />
      <path d="M8 5h8" stroke="#444" strokeWidth="2" /><path d="M6 8.500h11" stroke="#888" /><path d="M8 12.500h6" stroke="#555" />
      <path d="M16 13h7l-3.500 4z" fill="#444" />
    </svg>
  </button>
);

const Combo = ({ id, value, className }: { id?: string; value: string; className: string }) => (
  <div className={`relative ${className}`}>
    <select id={id} aria-label={id ? undefined : "Map theme"} className="h-[25px] w-full appearance-none rounded-[3px] border border-[#adadad] bg-gradient-to-b from-[#fcfcfc] to-[#ececec] pr-6 pl-1"><option>{value}</option></select>
    <TinyDown className="pointer-events-none absolute top-[10px] right-[7px]" />
  </div>
);

const Square = ({ label, children }: { label: string; children: ReactNode }) => (
  <button type="button" aria-label={label} className="relative ml-[7px] flex size-6 shrink-0 items-center justify-center rounded-[3px] border border-[#b4b4b4] bg-gradient-to-b from-[#fcfcfc] to-[#ededed]">{children}</button>
);

const field = "h-[25px] min-w-0 flex-1 rounded-[3px] border border-[#adadad] bg-white px-[3px]";

function Field({ label, value, wide = false }: { label: string; value: string; wide?: boolean }) {
  const id = useId();
  return (
    <div className="flex h-[25px] items-center">
      <label htmlFor={id} className={wide ? "w-[89px]" : "w-12"}>{label}</label>
      <input id={id} type="text" defaultValue={value} className={field} />
      <Override name={label} />
    </div>
  );
}

const Triangle = ({ open = false, dim = false }: { open?: boolean; dim?: boolean }) => (
  <svg viewBox="0 0 12 12" className="size-3 shrink-0" aria-hidden="true">
    <path d={open ? "M.5 2.500h11L6 9.500z" : "M3 .5v11L9.500 6z"} fill={dim ? "#b5b5b5" : "#444"} stroke={dim ? "#b5b5b5" : "#222"} strokeWidth=".8" />
  </svg>
);

function Section({ title, first = false, children }: { title: string; first?: boolean; children: ReactNode }) {
  return (
    <section className={first ? "pt-[10px]" : "pt-[5px]"}>
      <h3 className="h-[22px]">
        <button type="button" aria-expanded="true" className="flex h-[22px] items-center gap-2 pl-[1px] font-bold"><Triangle open />{title}</button>
      </h3>
      <div className="flex flex-col gap-[7px] rounded-[2px] border border-[#d2d2d2] bg-[#ebebeb] pt-3 pr-4 pb-3 pl-3">{children}</div>
    </section>
  );
}

function Collapsed({ title, check = false, dim = false }: { title: string; check?: boolean; dim?: boolean }) {
  return (
    <h3 className={`flex h-7 items-center font-bold ${dim ? "text-[#bebebe]" : ""}`}>
      {check && <span className="order-2 mr-2 flex"><Check label={`Enable ${title}`} disabled={dim} /></span>}
      <button type="button" aria-label={`Expand ${title}`} aria-expanded="false" className={`flex pl-[1px] ${check ? "mr-[6px]" : "mr-2"}`}><Triangle dim={dim} /></button>
      <span className="order-3">{title}</span>
    </h3>
  );
}

function MiniTool({ label, children, menu = false }: { label: string; children: ReactNode; menu?: boolean }) {
  return (
    <button type="button" aria-label={label} title={label} className="relative flex h-6 w-[25px] items-center justify-center">
      <Icon size="size-4">{children}</Icon>
      {menu && <TinyDown className="absolute right-0 bottom-1" />}
    </button>
  );
}

const MiniSep = () => <div className="mx-[3px] h-3 w-px bg-[#cfcfcf]" />;
const InArrow = () => <path d="M0 6C3-2 14-2 15 9h5l-8 8-7-8h5C9 5 4 4 0 6z" fill="#e9813a" stroke="#ce6a22" />;
const OutArrow = () => <path d="M6 17C6 7 10 5 16 5V0l8 7-8 8v-5c-4 0-5 1-5 7z" fill="#e9813a" stroke="#ce6a22" />;
const ScaleMarks = () => <path d="M8 21v-4M12 21v-5M16 21v-4M20 21v-5" stroke="#666" strokeWidth="1.500" />;

function RightDock() {
  const rot = useId();
  const crs = useId();
  return (
    <aside className="flex w-[463px] shrink-0 flex-col pt-[1px]">
      <Tabs tabs={["Items", "Undo History"]} />
      <DockTitle title="Items" />
      <div className="h-[136px] shrink-0 border border-[#b4b4b4] bg-white">
        <table className="w-full table-fixed border-collapse">
          <thead>
            <tr className="h-[21px] border-b border-[#b4b4b4] bg-gradient-to-b from-[#fdfdfd] to-[#ececec] text-left">
              <th scope="col" aria-label="Visible" className="w-8 border-r border-[#cfcfcf] py-0 pl-0.5"><Icon size="size-4"><Eye iris="#777" /></Icon></th>
              <th scope="col" aria-label="Locked" className="w-8 border-r border-[#cfcfcf] py-0 pl-[3px]"><Icon size="size-4"><path d="M6 12V7c0-7 10-7 10 0v5" stroke="#777" strokeWidth="2.500" /><rect x="2" y="11" width="18" height="12" rx="2" fill="#555" /></Icon></th>
              <th scope="col" className="py-0 pl-0.5 font-normal">Item</th>
            </tr>
          </thead>
          <tbody>
            <tr className="h-[17px]">
              <td className="py-0 pl-[3px]"><Check label="Map 1 visible" checked /></td>
              <td className="py-0 pl-[3px]"><Check label="Map 1 locked" /></td>
              <td className="py-0 pl-[3px]"><span className="flex items-center gap-[6px] font-bold"><Icon size="size-4"><MapSheet /></Icon>Map 1</span></td>
            </tr>
          </tbody>
        </table>
      </div>
      <div className="flex h-[6px] shrink-0 items-center justify-center"><div className="h-[3px] w-[18px] bg-[radial-gradient(#b0b0b0_35%,transparent_40%)] bg-[length:3px_3px]" /></div>
      <Tabs tabs={["Item Properties", "Atlas", "Layout", "Guides"]} />
      <DockTitle title="Item Properties" />
      <div className="flex h-[21px] shrink-0 items-center bg-[#c6c6c6] pl-[6px] font-bold">Map 1</div>
      <div className="flex h-[30px] shrink-0 items-center pl-[3px]">
        <MiniTool label="Update Map Preview"><Refresh /></MiniTool>
        <MiniSep />
        <MiniTool label="Set Map Extent to Match Canvas"><MapSheet /><path d="M8 8h10v9H8zM8 8L5 5M18 17l4 4" stroke="#444" /><InArrow /></MiniTool>
        <MiniTool label="View Current Map Extent in Canvas"><MapSheet /><path d="M8 8h8v9H8z" stroke="#555" /><OutArrow /></MiniTool>
        <MiniSep />
        <MiniTool label="Set Map Scale to Match Canvas"><MapSheet /><ScaleMarks /><InArrow /></MiniTool>
        <MiniTool label="Set Canvas to Match Map Scale"><MapSheet /><ScaleMarks /><OutArrow /></MiniTool>
        <MiniSep />
        <MiniTool label="Bookmarks" menu><MapSheet /><path d="M12 1h5v11l-2.500-3-2.500 3z" fill="#3f74b0" /></MiniTool>
        <MiniTool label="Interactively Edit Map Extent"><MapSheet /><path d="M14 4l4 4h-8zM14 21l4-4h-8zM7 12.500l3.500-3.500v7zM21 12.500l-3.500-3.500v7z" fill="#5c86ba" stroke="#3f6695" /></MiniTool>
        <MiniSep />
        <MiniTool label="Labeling Settings"><path d="M4 6h19v12H4l-4-6z" fill="#f6e04a" stroke="#c4a000" strokeWidth="1.500" /><text x="13" y="15.500" textAnchor="middle" fontSize="9" fontWeight="bold" fill="#333">abc</text></MiniTool>
        <MiniTool label="Clipping Settings"><rect x="1" y="8" width="15" height="15" fill="#a9c4a6" stroke="#7a9a78" strokeDasharray="2 1" /><circle cx="16" cy="8" r="8" fill="#b5ccb2" stroke="#9ab097" /><path d="M8 8h8v8C11 16 8 12 8 8z" fill="#5d85a8" /></MiniTool>
      </div>
      <div className="flex min-h-0 flex-1 border border-[#b4b4b4]">
        <div className="min-w-0 flex-1 overflow-hidden pr-[11px] pl-3">
          <Section title="Main Properties" first>
            <Field label="Scale" value="7780995" wide />
            <div className="flex h-[25px] items-center">
              <label htmlFor={rot} className="w-[89px]">Map rotation</label>
              <div className="flex h-6 min-w-0 flex-1 overflow-hidden rounded-[3px] border border-[#adadad] bg-white">
                <input id={rot} type="text" defaultValue="0.00 °" className="min-w-0 flex-1 px-1" />
                <div className="flex w-[14px] flex-col items-center justify-center gap-1 border-l border-[#c0c0c0]">
                  <button type="button" aria-label="Increase rotation" className="flex rotate-180"><TinyDown /></button>
                  <button type="button" aria-label="Decrease rotation" className="flex"><TinyDown /></button>
                </div>
              </div>
              <Override name="Map rotation" />
            </div>
            <div className="flex h-[25px] items-center">
              <label htmlFor={crs} className="w-[89px]">CRS</label>
              <Combo id={crs} value="Use Project CRS" className="min-w-0 flex-1" />
              <Square label="Select CRS">
                <Icon size="size-4"><circle cx="11" cy="11" r="10" fill="#b9cfe4" stroke="#888" /><path d="M1 11h20M11 1v20M3 5h16M3 17h16M11 1C4 7 4 15 11 21M11 1c7 6 7 14 0 20" stroke="#77889a" /><rect x="13" y="13" width="11" height="11" rx="1" fill="#c4a000" /><path d="M16 21l5-5" stroke="#fff" strokeWidth="2" /></Icon>
              </Square>
              <Override name="CRS" />
            </div>
            <CheckLine label="Draw map canvas items" checked />
          </Section>
          <Section title="Layers">
            <div className="flex h-[25px] items-center justify-between">
              <CheckLine label="Follow map theme" />
              <div className="flex items-center"><Combo value="(none)" className="w-[177px]" /><Override name="map theme" /></div>
            </div>
            <div className="flex h-[25px] items-center justify-between">
              <CheckLine label="Lock layers" />
              <div className="flex items-center"><Square label="Set layer list from a map theme"><Icon size="size-4"><Eye /></Icon><TinyDown className="absolute right-px bottom-[2px]" /></Square><Override name="layers" /></div>
            </div>
            <CheckLine label="Lock styles for layers" disabled />
          </Section>
          <Section title="Extents">
            <Field label="X min" value="30.019" />
            <Field label="Y min" value="1.687" />
            <Field label="X max" value="50.940" />
            <Field label="Y max" value="16.558" />
          </Section>
          <div className="pt-1">
            <Collapsed title="Temporal Range" check />
            <Collapsed title="Controlled by Atlas" check dim />
            <Collapsed title="Grids" />
            <Collapsed title="Overviews" />
            <Collapsed title="Position and Size" />
          </div>
        </div>
        <div className="flex w-[14px] shrink-0 flex-col border-l border-[#b9b9b9] bg-[#e0e0e0]">
          <button type="button" aria-label="Scroll up" className="flex h-[14px] shrink-0 rotate-180 items-center justify-center bg-[#fafafa]"><TinyDown /></button>
          <div className="h-[442px] shrink border-y border-[#b9b9b9] bg-gradient-to-r from-[#fdfdfd] to-[#f0f0f0]" />
          <div className="flex-1" />
          <button type="button" aria-label="Scroll down" className="flex h-[14px] shrink-0 items-center justify-center border-t border-[#b9b9b9] bg-[#fafafa]"><TinyDown /></button>
        </div>
      </div>
    </aside>
  );
}

const menus = ["Layout", "Edit", "View", "Items", "Add Item", "Atlas", "Settings"];
const bar = "flex shrink-0 items-center bg-gradient-to-b from-[#f9f9f9] to-[#ededed] border-b border-[#b4b4b4]";

export default function App() {
  return (
    <div className="flex h-screen flex-col overflow-hidden border border-[#9a9c9b] bg-[#efefef] font-['DejaVu_Sans',sans-serif] text-[13px] leading-4 text-[#1a1a1a]">
      <header className="relative flex h-[37px] shrink-0 items-center justify-center border-b border-[#222] bg-[#363636]">
        <h1 className="pt-px font-['Noto_Sans',sans-serif] text-[12px] font-bold text-[#eeeeee]">*Atlas</h1>
        <div className="absolute right-[9px] flex items-center gap-[22px]">
          <button type="button" aria-label="Minimize" className="mt-2 flex h-0.5 w-2 bg-white" />
          <button type="button" aria-label="Restore" className="ml-1 size-[6px] border-2 border-white" />
          <button type="button" aria-label="Close" className="flex size-[19px] items-center justify-center rounded-full bg-[#f58a28]">
            <svg viewBox="0 0 10 10" className="size-[10px]" stroke="#fff" strokeWidth="2.400"><path d="M1.500 1.500l7 7M8.500 1.500l-7 7" /></svg>
          </button>
        </div>
      </header>
      <nav className="flex h-[22px] shrink-0 items-center gap-px border-b border-[#d0d0d0] pl-[3px]">
        {menus.map((m, i) => (
          <button key={m} type="button" className="px-[7px] text-black">
            {i < 5 ? <><span className="underline underline-offset-2">{m[0]}</span>{m.slice(1)}</> : m}
          </button>
        ))}
      </nav>
      <div role="toolbar" aria-label="Layout and atlas" className={`h-[39px] ${bar}`}>{topTools}</div>
      <div role="toolbar" aria-label="Navigation and actions" className={`h-[38px] ${bar}`}>{bottomTools}</div>
      <main className="flex min-h-0 flex-1">
        <div role="toolbar" aria-label="Toolbox" className="flex w-10 shrink-0 flex-col items-center border-r border-[#b4b4b4] bg-gradient-to-r from-[#fafafa] to-[#ededed] pl-px">
          <div className="flex h-[13px] shrink-0 items-center"><div className="h-[6px] w-[18px] bg-[radial-gradient(#b0b0b0_35%,transparent_40%)] bg-[length:3px_3px]" /></div>
          {sideTools}
        </div>
        <div className="flex min-w-0 flex-1 flex-col pt-[1px]">
          <div className="h-[21px] shrink-0 overflow-hidden pl-[21px]"><Ruler zero={145} from={-38} to={336} marker={984} /></div>
          <div className="flex min-h-0 flex-1">
            <Ruler vertical zero={56} from={-14} to={238} marker={531} />
            <Canvas />
          </div>
        </div>
        <div className="flex w-[6px] shrink-0 items-center"><div className="ml-0.5 h-[18px] w-[3px] bg-[radial-gradient(#b0b0b0_35%,transparent_40%)] bg-[length:3px_3px]" /></div>
        <RightDock />
      </main>
      <footer className="flex h-[31px] shrink-0 items-center justify-end pr-0.5">
        <p className="mr-[55px] whitespace-pre text-black">x: 226.729 mm  y: 128.362 mm  page: 1</p>
        <div className="flex h-[25px] w-[136px] overflow-hidden rounded-[3px] border border-[#adadad]">
          <input aria-label="Zoom level" type="text" defaultValue="97.9%" className="min-w-0 flex-1 bg-white pl-[3px]" />
          <button type="button" aria-label="Zoom presets" className="flex w-[21px] items-center justify-center border-l border-[#b9b9b9] bg-[#f8f8f8]"><TinyDown /></button>
        </div>
        <input type="range" aria-label="Zoom" min={0} max={100} defaultValue={9}
          className="ml-[6px] h-4 w-[98px] appearance-none bg-[linear-gradient(to_right,#3d9be0_12px,#d2d2d2_12px)] bg-[length:100%_4px] bg-center bg-no-repeat [&::-webkit-slider-thumb]:size-[13px] [&::-webkit-slider-thumb]:appearance-none [&::-webkit-slider-thumb]:rounded-[3px] [&::-webkit-slider-thumb]:border [&::-webkit-slider-thumb]:border-[#aaa] [&::-webkit-slider-thumb]:bg-[#fafafa]" />
      </footer>
    </div>
  );
}
